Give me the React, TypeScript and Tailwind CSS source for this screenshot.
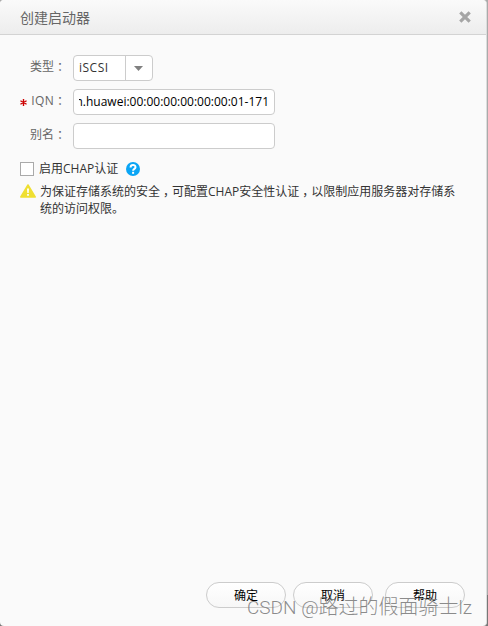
import type { ReactNode } from 'react';

const fontStack = "font-['Open_Sans','Noto_Sans_CJK_SC',sans-serif]";

function Field({ label, required, children }: { label: string; required?: boolean; children: ReactNode }) {
  return (
    <div className="flex h-[26px] items-center">
      <div className="flex w-[73px] shrink-0 items-center justify-end pr-[7px] leading-4 text-[#666666] -mt-[3px]">
        {required && (
          <svg viewBox="0 0 8 8" className="mr-1 mt-1 h-[7px] w-[7px]" stroke="#cc0000" strokeWidth="1.6">
            <path d="M4 0v8M0.5 2l7 4M7.5 2l-7 4" />
          </svg>
        )}
        <span className={required ? 'tracking-[0.3px]' : ''}>{label}</span>
        <span className="pt-px font-['Noto_Sans_CJK_TC',sans-serif]">：</span>
      </div>
      {children}
    </div>
  );
}

// full-width comma, centred in its cell
function Comma() {
  return <span className="inline-block w-3 pl-[3px] whitespace-nowrap">，</span>;
}

function DialogButton({ label, className = '' }: { label: string; className?: string }) {
  return (
    <button
      className={`h-[26px] w-[80px] rounded-full border border-[#cccccc] bg-linear-to-b from-white to-[#f7f7f7] pt-px text-xs leading-4 text-black ${className}`}
    >
      {label}
    </button>
  );
}

export default function App() {
  return (
    <div className={`relative h-[626px] w-[488px] overflow-hidden bg-linear-to-b from-[#aaaaaa] from-95% to-[#777777] to-95% text-xs ${fontStack}`}>
      <div className="flex h-full w-[487px] flex-col rounded-[4px] border-r border-[#dddddd] bg-[#fafafa]">
        <header className="flex h-[35px] shrink-0 items-center justify-between rounded-t-[4px] border-b border-[#d3d3d3] bg-linear-to-b from-[#fafafa] to-[#ededed] pl-5 pr-[15px]">
          <h1 className="pt-[2px] text-sm leading-5 text-[#666666]">创建启动器</h1>
          <svg viewBox="0 0 12 12" className="-mt-px h-3 w-3" stroke="#a5a5a5" strokeWidth="3.2">
            <path d="M1.3 1.3l9.4 9.4M10.7 1.3l-9.4 9.4" />
          </svg>
        </header>

        <main className="flex-1 pt-5">
          <div className="flex flex-col gap-2">
            <Field label="类型">
              <div className="flex h-[26px] w-[80px] rounded-[4px] border border-[#cccccc] bg-white text-[#333333]">
                <span className="flex w-[52px] items-center border-r border-[#cccccc] pl-[5px] tracking-[0.5px]">iSCSI</span>
                <span className="flex flex-1 items-center justify-center">
                  <svg viewBox="0 0 9 5" className="mr-px h-[5px] w-[9px]" fill="#808080">
                    <path d="M0 0h9L4.5 5z" />
                  </svg>
                </span>
              </div>
            </Field>
            <Field label="IQN" required>
              <div className="flex h-[26px] w-[202px] items-center rounded-[4px] border border-[#cccccc] bg-white px-[5px] text-black">
                <div className="flex flex-1 justify-end overflow-hidden whitespace-nowrap">
                  <span>iqn.2006-08.com.huawei:00:00:00:00:00:00:01-171</span>
                </div>
              </div>
            </Field>
            <Field label="别名">
              <div className="h-[26px] w-[202px] rounded-[4px] border border-[#cccccc] bg-white" />
            </Field>
          </div>

          <div className="mt-3 flex h-4 items-center pl-5 text-[#333333]">
            <span className="h-[14px] w-[14px] border border-[#aaaaaa] bg-white" />
            <span className="ml-[5px] leading-4">启用CHAP认证</span>
            <svg viewBox="0 0 14 14" className="ml-[8px] h-[14px] w-[14px]">
              <circle cx="7" cy="7" r="7" fill="#0aa5f5" />
              <path d="M4.6 5.4c0-3.200 4.900-3.100 4.900-.2C9.500 6.900 7.100 6.800 7.100 8.800" fill="none" stroke="white" strokeWidth="2" />
              <rect x="6.100" y="9.800" width="2" height="2" fill="white" />
            </svg>
          </div>

          <div className="mt-[7px] flex pl-5 text-[#333333]">
            <svg viewBox="0 0 16 14" className="h-[14px] w-4 shrink-0">
              <path d="M8 1L15.200 13H.8z" fill="#efdf32" stroke="#efdf32" strokeWidth="1.500" strokeLinejoin="round" />
              <path d="M7 4.500h2L8.700 9H7.300zM7.100 10h1.800v1.700H7.100z" fill="white" />
            </svg>
            <p className="-mt-px ml-1 leading-[17px] whitespace-nowrap">
              为保证存储系统的安全
              <Comma />
              可配置CHAP安全性认证
              <Comma />
              以限制应用服务器对存储系
              <br />
              统的访问权限。
            </p>
          </div>
        </main>

        <footer className="flex h-[44px] shrink-0 items-start pl-[206px]">
          <DialogButton label="确定" />
          <DialogButton label="取消" className="ml-[7px]" />
          <DialogButton label="帮助" className="ml-3" />
        </footer>
      </div>

      {/* watermark */}
      <span className="absolute left-[247px] top-[595px] whitespace-nowrap font-['Roboto','Noto_Sans_CJK_SC',sans-serif] text-[19px] font-light leading-6 text-[#777777]/85">
        CSDN @<span className="text-[20px]">路过的假面骑士</span>lz
      </span>
    </div>
  );
}
